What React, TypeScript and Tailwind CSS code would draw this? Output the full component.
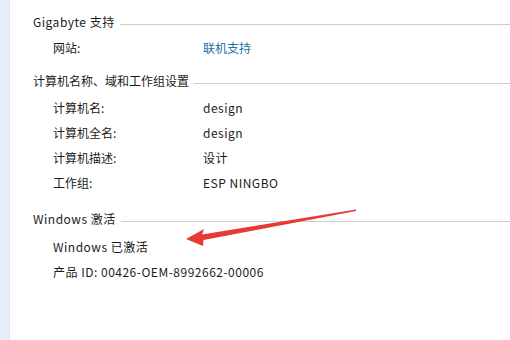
import React from 'react'

const font = { fontFamily: '"Noto Sans CJK SC", "Noto Sans", sans-serif' }

const Header = ({ title, className }: { title: string; className: string }) => (
    <div className={`flex items-center h-[25px] ${className}`}>
        <span className="whitespace-nowrap">{title}</span>
        <div className="flex-1 h-px bg-[#cfcfcf] ml-[5px] mt-[6px]" />
    </div>
)

const Row = ({ label, value, link, className }: { label: string; value?: string; link?: boolean; className: string }) => (
    <div className={`grid grid-cols-[150px_1fr] items-center h-[25px] pl-[20px] ${className}`}>
        <span className="whitespace-nowrap">{label}</span>
        {value && <span className={link ? 'text-[#1f6f9f]' : 'tracking-[0.5px]'}>{value}</span>}
    </div>
)

const App = () => {
    return (
        <div className="relative w-[510px] h-[340px] bg-white flex overflow-hidden text-[12px] text-[#1b1b1b]" style={font}>
            <div className="w-[10px] h-full bg-[#e6eef9] border-r border-[#dbe5f2]" />

            <div className="flex-1 flex flex-col pl-[23px]">
                <Header title="Gigabyte 支持" className="mt-[9px] tracking-[0.5px]" />
                <Row label="网站:" value="联机支持" link className="mt-[1px]" />

                <Header title="计算机名称、域和工作组设置" className="mt-[8px]" />
                <Row label="计算机名:" value="design" className="mt-[2px]" />
                <Row label="计算机全名:" value="design" className="" />
                <Row label="计算机描述:" value="设计" className="" />
                <Row label="工作组:" value="ESP NINGBO" className="" />

                <Header title="Windows 激活" className="mt-[11px] tracking-[0.5px]" />
                <Row label="Windows 已激活" className="mt-[3px] tracking-[0.5px]" />
                <Row label="产品 ID: 00426-OEM-8992662-00006" className="tracking-[0.5px]" />
            </div>

            {/* red annotation arrow */}
            <svg className="absolute left-0 top-0 pointer-events-none" width="510" height="340">
                <polygon
                    points="186,239 204,229 202,234.5 356,209.5 356,211 203.5,240 203,246"
                    fill="#e63b35"
                />
            </svg>
        </div>
    )
}

export default App
